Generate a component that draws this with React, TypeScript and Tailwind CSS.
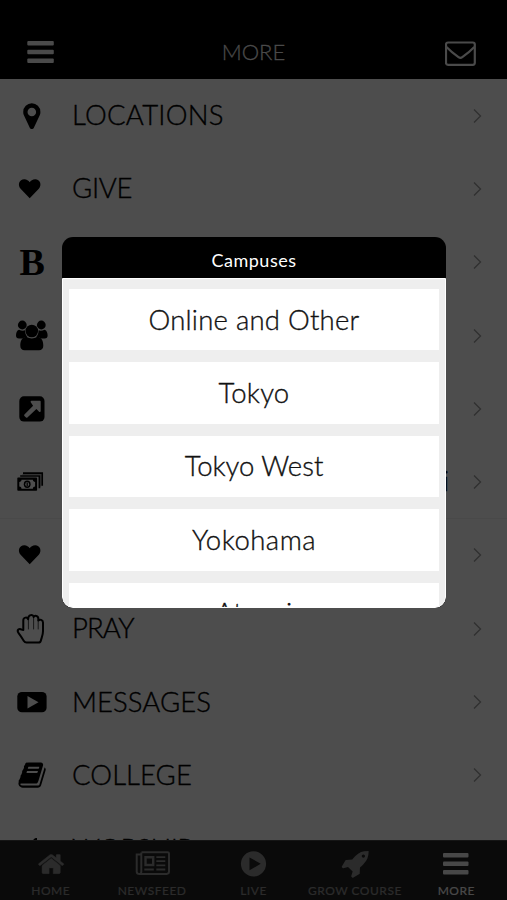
import type { ReactNode } from "react";

const Heart = () => (
  <path d="M15.7 27.2 6.600 17.700C3.200 13.600 5.400 8.300 10.200 8.200c2.600 0 4.300 1.400 5.500 3 1.200-1.600 2.900-3 5.500-3 4.800.1 7 5.400 3.600 9.500z" />
);

type Item = { label: string; style: string; icon: ReactNode; line?: boolean };

const items: Item[] = [
  {
    label: "LOCATIONS",
    style: "mb-0.5 tracking-[0.25px]",
    icon: (
      <path
        transform="translate(2.800 3.200) scale(.01676)"
        d="M1152 640q0-106-75-181t-181-75-181 75-75 181 75 181 181 75 181-75 75-181zm256 0q0 109-33 179l-364 774q-16 33-47.500 52t-67.500 19-67.500-19-46.500-52l-365-774q-33-70-33-179 0-212 150-362t362-150 362 150 150 362z"
      />
    ),
  },
  { label: "GIVE", style: "mb-0.5 tracking-[-0.3px]", icon: <Heart /> },
  {
    label: "",
    style: "",
    icon: (
      <text x="5.500" y="31" fontSize="38" fontWeight="700" fontFamily="Liberation Serif, serif">
        B
      </text>
    ),
  },
  {
    label: "",
    style: "",
    icon: (
      <>
        <circle cx="8.300" cy="7" r="4.400" />
        <circle cx="27.300" cy="7" r="4.400" />
        <path d="M5 11.700c2 1 4.500 1.200 6 .6 0 3 .8 5 2.300 6.500-1.800.2-3.200.7-4.300 1.700H5c-2 0-3-1.200-3-3 0-2.500.8-5.200 3-5.800zM30.600 11.700c-2 1-4.500 1.200-6 .6 0 3-.8 5-2.300 6.500 1.800.2 3.200.7 4.300 1.700h4c2 0 3-1.200 3-3 0-2.500-.8-5.200-3-5.800z" />
        <circle cx="17.800" cy="13" r="6.300" />
        <path d="M12.500 18.800c3.200 2.300 7.400 2.300 10.600 0 4.300.3 6.200 4 6.200 9 0 2.900-1.700 4.500-4.300 4.500H10.600c-2.600 0-4.300-1.600-4.300-4.500 0-5 1.900-8.700 6.200-9z" />
      </>
    ),
  },
  {
    label: "",
    style: "",
    icon: (
      <>
        <rect x="5.300" y="5.300" width="25.200" height="25.200" rx="4.600" />
        <path fill="#4d4d4d" d="M16.500 9.800h9.200c.6 0 1 .4 1 1V20c0 .9-1 1.300-1.600.7l-2.700-2.700-9 8.500c-.4.4-1 .4-1.400 0l-1.600-1.600c-.4-.4-.4-1 0-1.400l8.700-8.800-2.200-3.200c-.6-.6-.3-1.700.6-1.700z" />
      </>
    ),
  },
  {
    label: "i",
    style: "mb-0.5 ml-[371px]",
    line: true,
    icon: (
      <>
        <path fill="none" stroke="#000" strokeWidth="1.700" d="M9 9.200h19.200v12.500M6.200 12h19.200v12.300" />
        <path fill="none" stroke="#000" strokeWidth="1" d="M8.500 10.500h18.200v12" opacity=".35" />
        <rect x="3.300" y="13.600" width="19.800" height="13.200" rx=".8" />
        <path fill="#4d4d4d" d="M7.500 15.700h11.400c0 1.300 1 2.200 2.200 2.200v4.600c-1.200 0-2.200.9-2.200 2.200H7.500c0-1.300-1-2.200-2.200-2.200v-4.600c1.200 0 2.200-.9 2.200-2.200z" />
        <ellipse cx="13.200" cy="20.200" rx="3.400" ry="3.700" />
        <ellipse cx="13.200" cy="20.200" rx="1.900" ry="2.300" fill="#4d4d4d" />
        <path d="M12.600 18.500h1.200v3.500h-1.200z" />
      </>
    ),
  },
  { label: "", style: "", icon: <Heart /> },
  {
    label: "PRAY",
    style: "mb-0.5 tracking-[-0.9px]",
    icon: (
      <g fill="none" stroke="#000" strokeLinejoin="round" strokeLinecap="round">
        <path
          strokeWidth="2"
          d="M9.300 19V9.200c0-3 4-3.500 4.800-1C14 3.300 19.300 3 19.700 6c.8-2 4.600-1.300 4.600 1.600v2c1.400-1.600 4.700-.9 4.700 2v8.700c0 4-1.500 6.500-2.100 9.200-.3 1.300-1.200 2.100-2.500 2.100H12.500c-1.200 0-2-.5-2.600-1.500-1.700-2.800-3.200-5.300-5.300-8-2.300-3 .6-5.200 3-3.500z"
        />
        <path strokeWidth=".7" d="M14.400 8.500V18M19.600 6.500V18M24.200 9.500V18" />
      </g>
    ),
  },
  {
    label: "MESSAGES",
    style: "mb-0.5 tracking-[0.05px]",
    icon: (
      <>
        <rect x="3.300" y="8" width="29.300" height="20.300" rx="4.600" />
        <path fill="#4d4d4d" d="m13.500 12 11 6.200-11 6.200z" />
      </>
    ),
  },
  {
    label: "COLLEGE",
    style: "mb-0.5 tracking-[0.05px]",
    icon: (
      <path
        transform="translate(3.400 3.400) scale(.0164)"
        d="M1703 478q40 57 18 129l-275 906q-19 64-76.500 107.500t-122.500 43.500h-923q-77 0-148.500-53.500t-99.500-131.500q-24-67-2-127 0-4 3-27t4-37q1-8-3-21.500t-3-19.500q2-11 8-21t16.500-23.500 16.500-23.500q23-38 45-91.500t30-91.500q3-10 .5-30t-.5-28q3-11 17-28t17-23q21-36 42-92t25-90q1-9-2.500-32t.5-28q4-13 22-30.500t22-22.500q19-26 42.500-84.500t27.500-96.500q1-8-3-25.500t-2-26.500q2-8 9-18t18-23 17-21q8-12 16.500-30.500t15-35 16-36 19.500-32 26.500-23.500 36-11.500 47.500 5.500l-1 3q38-9 51-9h761q74 0 114 56t18 130l-274 906q-36 119-71.500 153.500t-128.500 34.500h-869q-27 0-38 15-11 16-1 43 24 70 144 70h923q29 0 56-15.500t35-41.500l300-987q7-22 5-57 38 15 59 43zm-1064 2q-4 13 2 22.500t20 9.500h608q13 0 25.500-9.500t16.500-22.500l21-64q4-13-2-22.500t-20-9.500h-608q-13 0-25.500 9.500t-16.500 22.500zm-83 256q-4 13 2 22.500t20 9.500h608q13 0 25.500-9.500t16.500-22.500l21-64q4-13-2-22.500t-20-9.500h-608q-13 0-25.500 9.500t-16.500 22.500z"
      />
    ),
  },
  {
    label: "WORSHIP",
    style: "tracking-[-0.6px]",
    icon: <path d="M19 9.500c1-2 2-2.500 4-2.500v18h-3V11z" />,
  },
];

const tabs: { label: string; style: string; icon: ReactNode }[] = [
  {
    label: "HOME",
    style: "text-[#2b2b2b]",
    icon: (
      <path
        transform="translate(6 .6) scale(.0158 .0150)"
        stroke="currentColor"
        strokeWidth="30"
        d="M1472 992v480q0 26-19 45t-45 19h-384v-384h-256v384h-384q-26 0-45-19t-19-45v-480q0-1 .5-3t.5-3l575-474 575 474q1 2 1 6zm223-69l-62 74q-8 9-21 11h-3q-13 0-21-7l-692-577-692 577q-12 8-24 7-13-2-21-11l-62-74q-8-10-7-23.500t11-21.500l719-599q32-26 76-26t76 26l244 204v-195q0-14 9-23t23-9h192q14 0 23 9t9 23v408l219 182q10 8 11 21.500t-7 23.500z"
      />
    ),
  },
  {
    label: "NEWSFEED",
    style: "text-[#2b2b2b]",
    icon: (
      <g fill="none" stroke="currentColor" strokeWidth="2">
        <path d="M8.500 2.300h26.200c.8 0 1.300.5 1.300 1.300v18c0 1.500-1 2.300-2.300 2.300H6.500c-1.800 0-2.800-1-2.800-2.500V4.600h3.600M8.300 2.600v18.800c0 1.600-.8 2.500-2 2.500" />
        <path strokeWidth="2.400" d="M12.500 7.300h7.700v7.700h-7.700z" />
        <path strokeWidth="1.800" d="M23.300 7.100h9M23.300 11.100h9M23.300 15.300h9M11.300 19.500h9.500M23.300 19.500h9" />
      </g>
    ),
  },
  {
    label: "LIVE",
    style: "text-[#2b2b2b]",
    icon: <path fillRule="evenodd" d="M19.500 1.200a12.600 12.600 0 1 0 0 25.200 12.600 12.600 0 0 0 0-25.200zm-4 6.200 11.200 6.400-11.200 6.400z" />,
  },
  {
    label: "GROW COURSE",
    style: "text-[#2b2b2b]",
    icon: (
      <path
        transform="translate(6.200 -1.200) scale(.0165)"
        d="M1440 448q0-40-28-68t-68-28-68 28-28 68 28 68 68 28 68-28 28-68zm224-288q0 249-75.500 430.500t-253.500 360.500q-81 80-195 176l-20 379q-2 16-16 26l-384 224q-7 4-16 4-12 0-23-9l-64-64q-13-14-8-32l85-276-281-281-276 85q-3 1-9 1-14 0-23-9l-64-64q-17-19-5-39l224-384q10-14 26-16l379-20q96-114 176-195 188-187 358-258t431-71q14 0 24 9.500t10 22.500z"
      />
    ),
  },
  {
    label: "MORE",
    style: "text-[#484848]",
    icon: (
      <>
        <rect x="6" y="3" width="25.500" height="4.500" rx="1" />
        <rect x="6" y="11.500" width="25.500" height="4.500" rx="1" />
        <rect x="6" y="20" width="25.500" height="4.500" rx="1" />
      </>
    ),
  },
];

const campuses = [
  { name: "Online and Other", style: "tracking-[0.25px]" },
  { name: "Tokyo", style: "tracking-[0.2px]" },
  { name: "Tokyo West", style: "tracking-[0px]" },
  { name: "Yokohama", style: "tracking-[0.5px]" },
  { name: "Atsugi", style: "tracking-[0.6px]" },
];

export default function App() {
  return (
    <div className="relative flex h-[900px] w-[507px] flex-col overflow-hidden bg-[#4d4d4d] font-['Lato',sans-serif] text-black">
      <header className="flex h-[79px] shrink-0 items-end justify-between bg-black px-[26px] pb-[9px] text-[#4a4a4a]">
        <svg width="36" height="36" fill="currentColor">
          <rect x="1.300" y="7" width="26.500" height="4.500" rx="1" />
          <rect x="1.300" y="15.700" width="26.500" height="4.500" rx="1" />
          <rect x="1.300" y="24.500" width="26.500" height="4.500" rx="1" />
        </svg>
        <h1 className="mb-px text-[22px] font-light leading-[35px] [-webkit-text-stroke:0.3px]">MORE</h1>
        <svg width="36" height="36" fill="none" stroke="currentColor" strokeWidth="2.200">
          <rect x="1" y="8.500" width="28.800" height="22.300" rx="2" />
          <path d="M1.500 13c4 4.200 8 7.300 12 10.200 1.300.9 2.500.9 3.800 0 4-2.900 8-6 12-10.200" />
        </svg>
      </header>

      <main className="h-[761px] shrink-0 overflow-hidden">
        {items.map((item, i) => (
          <div key={i} className={`flex h-[73.300px] items-center pl-[14px] pr-[24px] ${item.line ? "border-b border-[#494949]" : ""}`}>
            <svg width="36" height="36" className="mr-[22px] shrink-0 overflow-visible">
              {item.icon}
            </svg>
            <span className={`whitespace-nowrap text-[27.500px] font-light leading-[35px] [-webkit-text-stroke:0.35px] ${item.style}`}>{item.label}</span>
            <svg width="12" height="18" className="ml-auto shrink-0" fill="none" stroke="#303030" strokeWidth="1.300">
              <path d="m3 2.500 6.500 6.500L3 15.500" />
            </svg>
          </div>
        ))}
      </main>

      <nav className="grid h-[60px] shrink-0 grid-cols-5 border-t border-[#151515] bg-[#0a0a0a]">
        {tabs.map((tab) => (
          <div key={tab.label} className={`flex flex-col items-center pt-[9px] ${tab.style}`}>
            <svg width="39" height="28" fill="currentColor" className="shrink-0 overflow-visible">
              {tab.icon}
            </svg>
            <span className="mt-1 whitespace-nowrap text-[12px] font-medium leading-[17px] tracking-[0.5px] [-webkit-text-stroke:0.2px]">{tab.label}</span>
          </div>
        ))}
      </nav>

      <section className="absolute left-[62px] top-[237px] flex h-[371px] w-[384px] flex-col overflow-hidden rounded-[11px] bg-black">
        <h2 className="h-[41px] shrink-0 text-center text-[18px] font-normal leading-[46px] tracking-[0.5px] text-white">Campuses</h2>
        <div className="flex flex-1 flex-col gap-[12px] overflow-hidden rounded-b-[11px] border border-white bg-[#eeeeee] px-[6px] pt-[10px]">
          {campuses.map((campus) => (
            <button key={campus.name} className={`h-[61.400px] shrink-0 bg-white text-center text-[27.500px] font-light leading-[60px] text-[#111] [-webkit-text-stroke:0.35px] ${campus.style}`}>
              {campus.name}
            </button>
          ))}
        </div>
      </section>
    </div>
  );
}
